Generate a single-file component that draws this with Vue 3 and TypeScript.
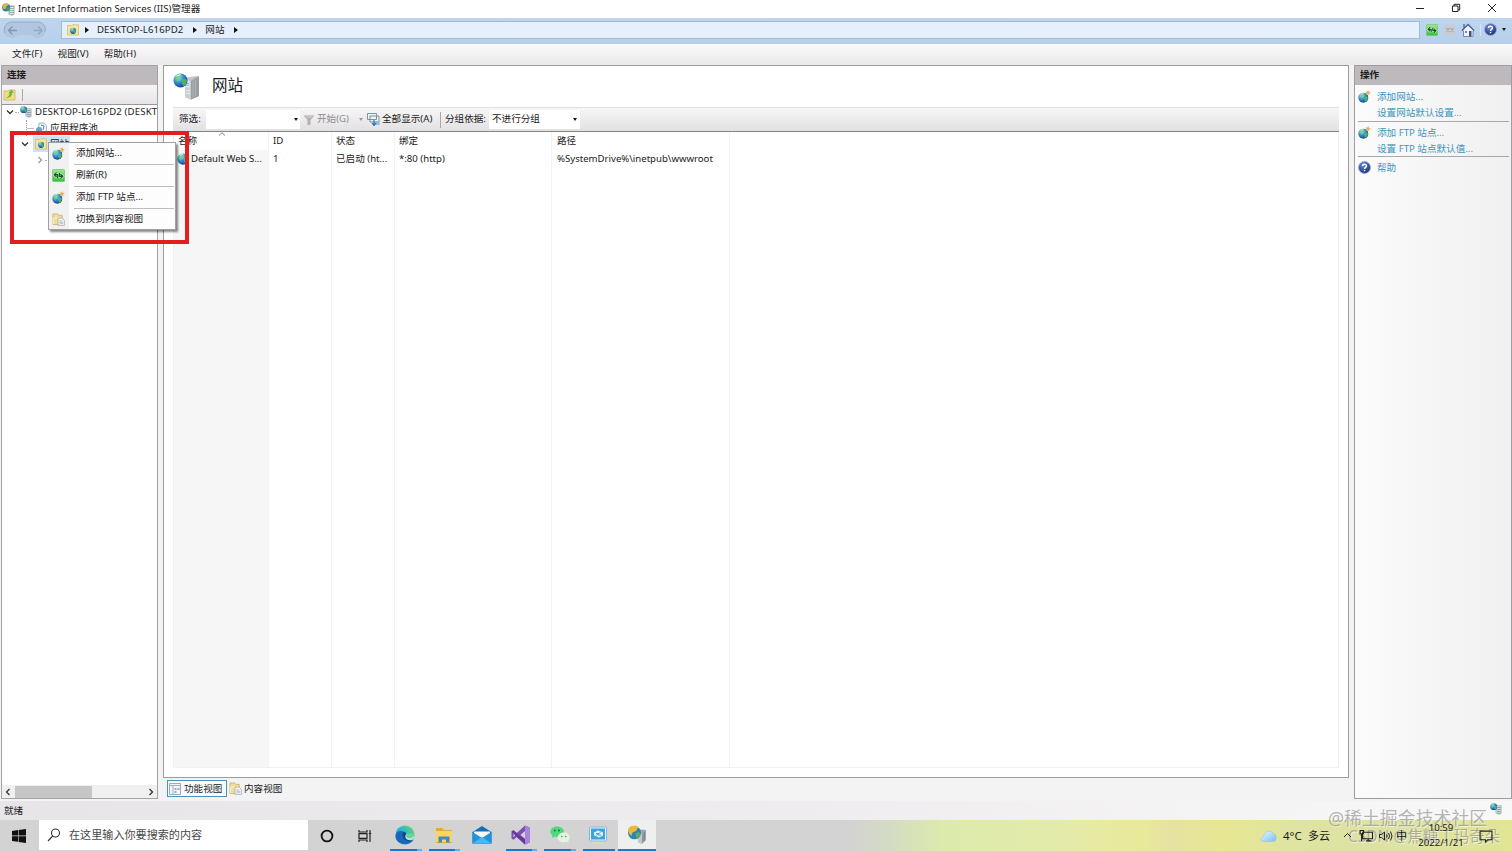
<script setup lang="ts">
interface Task { id: string; icon: string; running?: boolean; grouped?: boolean; active?: boolean }

const menus = ['文件(F)', '视图(V)', '帮助(H)']
const columns = ['名称', 'ID', '状态', '绑定', '路径', '']
const site = ['Default Web S...', '1', '已启动 (ht...', '*:80 (http)', '%SystemDrive%\\inetpub\\wwwroot', '']
const contextMenu = [
  { icon: 'addsite', label: '添加网站...' },
  { icon: 'refresh', label: '刷新(R)' },
  { icon: 'addsite', label: '添加 FTP 站点...' },
  { icon: 'content', label: '切换到内容视图' },
]
const actionGroups = [
  { icon: 'addsite', links: ['添加网站...', '设置网站默认设置...'] },
  { icon: 'addsite', links: ['添加 FTP 站点...', '设置 FTP 站点默认值...'] },
  { icon: 'help', links: ['帮助'] },
]
const tasks: Task[] = [
  { id: 'edge', icon: 'edge', running: true, grouped: true },
  { id: 'files', icon: 'files', running: true, grouped: true },
  { id: 'mail', icon: 'mail' },
  { id: 'vs', icon: 'vs', running: true, grouped: true },
  { id: 'wechat', icon: 'wechat', running: true, grouped: true },
  { id: 'remote', icon: 'remote', running: true },
  { id: 'iis', icon: 'iistask', running: true, active: true },
]
</script>

<template>
  <div class="screen">
    <svg class="defs" width="0" height="0">
      <defs>
        <radialGradient id="gGlobe" cx=".35" cy=".3" r=".75">
          <stop offset="0" stop-color="#a8e4fa" /><stop offset=".45" stop-color="#3b93d4" /><stop offset="1" stop-color="#153c8c" />
        </radialGradient>
        <linearGradient id="gServer" x1="0" x2="1" y1="0" y2="1">
          <stop offset="0" stop-color="#d6dade" /><stop offset="1" stop-color="#8a8f94" />
        </linearGradient>
        <radialGradient id="gHelp" cx=".4" cy=".3" r=".7">
          <stop offset="0" stop-color="#6d8be0" /><stop offset="1" stop-color="#16308c" />
        </radialGradient>
        <linearGradient id="gGreen" x1="0" x2="0" y1="0" y2="1">
          <stop offset="0" stop-color="#a0e892" /><stop offset="1" stop-color="#35c03a" />
        </linearGradient>
        <linearGradient id="gEdge" x1="0" x2="1" y1="1" y2="0">
          <stop offset="0" stop-color="#1273d0" /><stop offset=".5" stop-color="#27b3dc" /><stop offset="1" stop-color="#6ade55" />
        </linearGradient>
        <linearGradient id="gCloud" x1="0" x2="1" y1="0" y2="1">
          <stop offset="0" stop-color="#eafaff" /><stop offset="1" stop-color="#7dbdf0" />
        </linearGradient>
      </defs>
      <symbol id="globe" viewBox="0 0 16 16">
        <circle cx="8" cy="8" r="7.5" fill="url(#gGlobe)" />
        <path d="M2 4.500C4 1.500 7 1 9 1.500L10 4 7 5.500 6 8 3.500 8.500z" fill="#6fce6b" opacity=".75" />
        <path d="M9 7l4-1 2 2-1 4-3 2.500L9.500 11z" fill="#4fbd5e" opacity=".85" />
        <path d="M4 3.500C5.500 2 7 1.800 8 2" stroke="#e5fbff" stroke-width="1.300" fill="none" />
      </symbol>
      <symbol id="addsite" viewBox="0 0 14 14">
        <use href="#globe" x="0" y="2.500" width="11.500" height="11.500" />
        <path d="M11 0l.8 2 2.100.6-1.900 1.100.2 2.200-1.700-1.300-2 .8.7-2-1.200-1.800 2.100.1z" fill="#e8b061" />
      </symbol>
      <symbol id="iis" viewBox="0 0 27 27">
        <path d="M12 6.500l3-2.500 11-1v20l-8 3.500-6-2.500z" fill="url(#gServer)" />
        <path d="M12 7l6 1v18.500l-6-2.500z" fill="#c9ced3" />
        <path d="M18 8l8-4v19l-8 3.500z" fill="#999ea3" />
        <path d="M20 8v16M22.500 7v16" stroke="#b9bdc1" stroke-width=".8" />
        <path d="M13 17l4 .8M13 20l4 .8" stroke="#eef0f2" stroke-width=".9" />
        <path d="M12.500 7.500h4v7l-4-.5z" fill="#e9effa" />
        <path d="M13 10l3 .4M13 12l3 .4" stroke="#7389c8" stroke-width=".8" />
        <use href="#globe" x="0" y="0" width="15" height="15" />
      </symbol>
      <symbol id="iissmall" viewBox="0 0 13 13">
        <path d="M6 2.500h6.500v9L10 12.800 6 11.500z" fill="#9fb2b8" />
        <path d="M7 3.500h4.500v8.300H7z" fill="#dbe5e8" />
        <path d="M7.500 5h4M7.500 7h4M7.500 9h4M7.500 11h4" stroke="#728f8c" stroke-width=".9" />
        <use href="#globe" x="0" y="0" width="8" height="8" />
      </symbol>
      <symbol id="appicon" viewBox="0 0 13 13">
        <path d="M6.500 2.500h6v9l-2.500 1.300-3.500-1.500z" fill="#9ab0aa" />
        <path d="M8 4.500h3.500M8 6.500h3.500M8 8.500h3.500M8 10.500h3.500" stroke="#edf3ed" stroke-width=".9" />
        <circle cx="4.200" cy="4.500" r="4" fill="#2a7f9d" />
        <path d="M.5 2C2.500-.2 6 .1 7.200 1.500L4.500 3.500 3.800 6 1.500 6z" fill="#dfb342" />
        <path d="M5 5l3-.8-.8 3.300L5 8z" fill="#48a35c" />
      </symbol>
      <symbol id="iistask" viewBox="0 0 20 20">
        <path d="M11 6l3-1.500 5 .5v10l-4 4-4-2z" fill="#a0a4a7" />
        <path d="M11 7.500l4 .8V19l-4-2z" fill="#c2c7ca" />
        <path d="M16 8v9M17.500 7v9" stroke="#777c80" stroke-width=".7" />
        <circle cx="7.500" cy="7.800" r="6.500" fill="#2b83b8" />
        <path d="M1.500 3c3-3 8-2.500 10-1L9 6 5.500 7.500 4.500 11C1.500 9 .5 5 1.500 3z" fill="#e8b93a" />
        <path d="M8.500 8l4-1 .5 4-3.500 3z" fill="#58ae62" />
      </symbol>
      <symbol id="folder" viewBox="0 0 12 12">
        <path d="M.5 1.500h4l1-.8h6V11H.5z" fill="#f5e3a2" stroke="#d9bc6c" stroke-width=".8" />
        <use href="#globe" x="2.700" y="3.500" width="6.600" height="6.600" />
      </symbol>
      <symbol id="refresh" viewBox="0 0 12 12">
        <rect x=".4" y=".4" width="11.200" height="11.200" rx="1" fill="url(#gGreen)" stroke="#6cc866" stroke-width=".7" />
        <path d="M4.200 3.300L2 5.300l2.200 2M2.200 5.300h3v3M7.800 8.700L10 6.700l-2.200-2M9.800 6.700h-3v-3" stroke="#e6fbe2" stroke-width="2.300" fill="none" />
        <path d="M4.200 3.300L2 5.300l2.200 2M2.200 5.300h3v3M7.800 8.700L10 6.700l-2.200-2M9.800 6.700h-3v-3" stroke="#14622a" stroke-width="1.200" fill="none" />
      </symbol>
      <symbol id="content" viewBox="0 0 14 14">
        <path d="M1 1h5l1 1.500h4v10H1z" fill="#f1dc9a" stroke="#c5ab65" stroke-width=".8" />
        <path d="M1.500 12V5.500h8" fill="none" stroke="#fff5d2" />
        <path d="M6.500 5.500h4.500L13.300 8v5.600H6.500z" fill="#f7f7f5" stroke="#9b9d9f" stroke-width=".7" />
        <path d="M8 8.500h3M8 10h4M8 11.600h4" stroke="#8ba0c0" stroke-width=".7" />
      </symbol>
      <symbol id="help" viewBox="0 0 13 13">
        <circle cx="6.500" cy="6.500" r="6" fill="url(#gHelp)" stroke="#a4acc4" stroke-width=".9" />
        <path d="M4.500 5c0-2.400 4.100-2.300 4 0-.1 1.400-2 1.300-2 2.900M6.500 9v1.300" stroke="#fff" stroke-width="1.400" fill="none" />
      </symbol>
      <symbol id="edge" viewBox="0 0 20 20">
        <circle cx="10" cy="10" r="9.500" fill="url(#gEdge)" />
        <path d="M.5 11C1 6.500 5 5 8.500 6.500 6.500 8 6.500 12 9 14.500c2.500 2.300 6 2.300 9.500.5C16 18.500 10 20.500 5 18 2 16.500.5 14 .5 11z" fill="#1668bc" />
        <path d="M8.500 6.500C6.500 8 6.500 12 9 14.500c2.500 2.300 6 2.300 9.500.5-2 .7-5 .5-6.500-1-1.500-1.300-1.500-2.500-.5-4 .5-1.500-1-3-3-3.500z" fill="#114a8b" />
        <path d="M11.500 8c1 1.200.6 2.300 0 3.200.3 1.500 2.300 2 4.500 1.500 2.300-.6 3.700-2 3.500-4z" fill="#5fdc8c" />
        <path d="M11.300 8.500c.8 1 .5 2 0 2.700.4 1.600 2.500 2.100 5 1.500l2.700-1.400 0 1.600-2 2c-3 .4-5-.2-6-1.500-1-1.300-.8-2.400-.2-3.500z" fill="#d6d6d6" />
      </symbol>
      <symbol id="files" viewBox="0 0 20 20">
        <path d="M2 3h6l2 2h8v13H2z" fill="#e5a92f" />
        <path d="M2 6h16v11H2z" fill="#fbd563" />
        <path d="M4.500 17.500v-6h11v6H12v-3H8v3z" fill="#4589bd" />
      </symbol>
      <symbol id="mail" viewBox="0 0 20 20">
        <path d="M.5 7L10 1l9.500 6v11.500H.5z" fill="#1570b8" />
        <path d="M2 6.500h16V14H2z" fill="#f4faff" />
        <path d="M.5 7l9.500 6 9.500-6v11.500H.5z" fill="#2391dc" />
        <path d="M.5 18.500L10 12l9.500 6.500z" fill="#45baf0" />
      </symbol>
      <symbol id="vs" viewBox="0 0 20 20">
        <path d="M14 .5l5 2.200v14.600l-5 2.200L5.800 12 2.500 14.800.5 13.500v-7l2-1.300L5.800 8z M14 6l-4.600 4 4.600 4z M2.500 7.800v4.400L4.600 10z" fill="#7e4cb4" fill-rule="evenodd" />
        <path d="M14 .5l5 2.200v14.600l-5 2.200z" fill="#a983dc" />
        <path d="M2.500 5.200l3.300 2.800L14 14v5.500L5.800 12 .5 6.500z" fill="#68399a" />
      </symbol>
      <symbol id="wechat" viewBox="0 0 20 20">
        <path d="M2 13l.5-2.500C-2 7 1 1.500 7 1.500s9 5 5.500 8.500S5 11.500 5 11.500z" fill="#4fd97c" />
        <ellipse cx="13.700" cy="12.500" rx="6" ry="5" fill="#e4f5df" />
        <path d="M16 16l2.500 2-.4-3z" fill="#e4f5df" />
        <circle cx="4.800" cy="5.500" r=".9" fill="#176c2d" /><circle cx="9" cy="5.500" r=".9" fill="#176c2d" />
        <circle cx="11.800" cy="11.500" r=".8" fill="#708070" /><circle cx="15.700" cy="11.500" r=".8" fill="#708070" />
      </symbol>
      <symbol id="remote" viewBox="0 0 20 20">
        <rect x="1.500" y="2" width="17" height="14" rx="1" fill="#e9f5fc" stroke="#83b6d6" />
        <rect x="3" y="3.500" width="14" height="11" fill="#3aa3e0" />
        <path d="M6 7.500l4-2 5 2v3l-4 2-5-2z" fill="#dff3fd" />
        <path d="M8 10.500L12.500 7.500M8 8.500h3M10 10h3" stroke="#3aa3e0" />
        <path d="M4 17.500h12" stroke="#e8d8ad" stroke-width="1.500" />
      </symbol>
    </svg>

    <header class="titlebar">
      <svg class="app-icon"><use href="#appicon" /></svg>
      <span class="title">Internet Information Services (IIS)管理器</span>
      <div class="window-buttons">
        <svg viewBox="0 0 10 10"><path d="M1 5.500h8" /></svg>
        <svg viewBox="0 0 10 10"><path d="M1.500 3h5.500v5.500H1.500zM3 3V1.300h5.700V7H7" /></svg>
        <svg viewBox="0 0 10 10"><path d="M1 1l8 8M9 1L1 9" /></svg>
      </div>
    </header>

    <div class="addressbar">
      <svg class="nav" viewBox="0 0 44 19">
        <path d="M9.500 1h25c11 0 11 16 0 16-4 0-4-3-8-3h-9c-4 0-4 3-8 3C-2 17-2 1 9.500 1z" fill="#b0c6e1" />
        <path d="M1.500 12C0 5 4 1 9.500 1h25c6 0 9 5 7.500 10" fill="none" stroke="#93a8c6" stroke-width=".9" />
        <path d="M5.500 9.500H14M9.500 5.500l-4 4 4 4" fill="none" stroke="#8795ab" stroke-width="1.300" />
        <path d="M30.500 9.500H39M35 5.500l4 4-4 4" fill="none" stroke="#98a8c0" stroke-width="1.300" />
      </svg>
      <div class="address">
        <svg class="i12"><use href="#folder" /></svg><i class="tri"></i>
        <span class="host">DESKTOP-L616PD2</span><i class="tri"></i>
        <span class="leaf">网站</span><i class="tri"></i>
      </div>
      <div class="address-tools">
        <svg class="i12"><use href="#refresh" /></svg>
        <svg class="i12" viewBox="0 0 12 12"><rect x=".5" y=".5" width="11" height="11" rx="1" fill="#c7cdd3" /><path d="M2.500 4l3 4M5.500 4l-3 4M6.500 4l3 4M9.500 4l-3 4" fill="none" stroke="#a1a8ae" stroke-width="1.100" /></svg>
        <svg class="home" viewBox="0 0 14 14"><path d="M1 7.500L7 1.500l6 6-1 .5v5.500H2.500V8z" fill="#edf2fb" stroke="#7080aa" stroke-width=".9" /><path d="M1 7.500l6-6 6 6M3 1v4" fill="none" stroke="#4d62a5" stroke-width="1.300" /><path d="M8 8h2.500v5.500H8z" fill="#47536e" /><path d="M4 8h2v2H4z" fill="#6b91d2" /></svg>
        <i class="sep"></i>
        <svg class="i13"><use href="#help" /></svg><i class="caret"></i>
      </div>
    </div>

    <nav class="menubar"><span v-for="m in menus" :key="m">{{ m }}</span></nav>

    <main class="workspace">
      <aside class="connections">
        <h2>连接</h2>
        <div class="conn-tools">
          <svg class="i13" viewBox="0 0 13 13"><path d="M1 3h4l1-1h6v10H1z" fill="#f5dd83" stroke="#d0b15c" stroke-width=".8" /><path d="M3 10c2.500-1 3.500-3 3.500-5L5 5.500 8.500 1.500 11 5 9 4.500c.5 3-1.500 5.500-6 5.500z" fill="#62bb40" /></svg>
          <i></i>
        </div>
        <div class="tree">
          <div class="node root"><svg class="chev" viewBox="0 0 8 8"><path d="M1 2.500l3 3 3-3" /></svg><i class="dots"></i><svg class="i12"><use href="#iissmall" /></svg><span>DESKTOP-L616PD2 (DESKT</span></div>
          <div class="node pools"><i class="branch"></i><svg class="i12" viewBox="0 0 12 12"><path d="M4 1h5l2.500 3v6L9 11.500H3z" fill="#eef3f6" stroke="#8ea7b8" stroke-width=".8" /><circle cx="4" cy="8" r="3" fill="#60a6c6" /><path d="M6 3l3 1-1 4" fill="none" stroke="#4a8cc1" /></svg><span>应用程序池</span></div>
          <div class="node sites"><svg class="chev" viewBox="0 0 8 8"><path d="M1 2.500l3 3 3-3" /></svg><b><svg class="i12"><use href="#folder" /></svg></b><span>网站</span></div>
          <div class="node child"><svg class="chev pale" viewBox="0 0 8 8"><path d="M2.500 1l3 3-3 3" /></svg><i class="dots"></i></div>
        </div>
        <div class="hscroll">
          <svg viewBox="0 0 8 8"><path d="M5.500 1l-3 3 3 3" /></svg><i></i><svg class="end" viewBox="0 0 8 8"><path d="M2.500 1l3 3-3 3" /></svg>
        </div>
      </aside>

      <section class="center">
        <div class="page">
          <div class="heading"><svg><use href="#iis" /></svg><h1>网站</h1></div>
          <div class="toolbar">
            <span class="lbl">筛选:</span>
            <div class="combo filter"><i class="caret"></i></div>
            <svg class="i12 funnel" viewBox="0 0 12 12"><path d="M.5 1.500h11L7.500 6v4.500l-3 1V6z" fill="#b1b1b1" /><path d="M3 3h6" stroke="#d8d8d8" /></svg>
            <span class="go">开始(G)</span><i class="caret dim"></i>
            <svg class="i13" viewBox="0 0 13 13"><path d="M.5.500h9v6h-9zM3 3h9v6H3z" fill="#edf3f8" stroke="#71879c" stroke-width=".9" /><path d="M6 8h6.500v4H6z" fill="#8fbde0" /><path d="M7 7v5M5 10l2 2.500 2-2.500" stroke="#2972b0" stroke-width="1.100" fill="none" /></svg>
            <span class="all">全部显示(A)</span><i class="bar"></i>
            <span class="group">分组依据:</span>
            <div class="combo grouping"><span>不进行分组</span><i class="caret"></i></div>
          </div>
          <div class="list">
            <div v-for="(c, i) in columns" :key="i" class="col">
              <svg v-if="i === 0" class="sort" viewBox="0 0 8 4"><path d="M1 3.500L4 .8l3 2.700" /></svg>
              <span class="head">{{ c }}</span>
              <span class="cell"><svg v-if="i === 0" class="i12"><use href="#globe" /></svg><em>{{ site[i] }}</em></span>
            </div>
          </div>
        </div>
        <div class="tabs">
          <span class="tab on"><svg class="i12" viewBox="0 0 12 12"><path d="M.5.500h11v11H.5z" fill="#f4f7fa" stroke="#8796a5" stroke-width=".8" /><path d="M1 2.500h10M4 3v8" stroke="#a0afbd" /><path d="M5.500 5h2v2h-2zM8.500 5h2v2h-2zM5.500 8h2v2h-2z" fill="#9ab" /></svg>功能视图</span>
          <span class="tab"><svg class="i13"><use href="#content" /></svg>内容视图</span>
        </div>
      </section>

      <aside class="actions">
        <h2>操作</h2>
        <div v-for="(g, i) in actionGroups" :key="i" class="action-group">
          <svg class="i13"><use :href="'#' + g.icon" /></svg>
          <div><a v-for="l in g.links" :key="l">{{ l }}</a></div>
        </div>
      </aside>
    </main>

    <footer class="status"><span>就绪</span><svg class="i12"><use href="#iissmall" /></svg></footer>

    <div class="taskbar">
      <div class="start"><svg viewBox="0 0 14 14"><path d="M0 2l6-.9v5.500H0zM6.600 1L14 0v6.600H6.600zM0 7.300h6v5.500L0 12zM6.600 7.300H14V14l-7.400-1z" /></svg></div>
      <div class="search"><svg viewBox="0 0 14 14"><circle cx="8.500" cy="5" r="4" /><path d="M5.700 8L1 13" /></svg><span>在这里输入你要搜索的内容</span></div>
      <div class="sys"><svg viewBox="0 0 14 14"><circle cx="7" cy="7" r="5.400" fill="none" stroke="#111" stroke-width="1.800" /></svg></div>
      <div class="sys"><svg viewBox="0 0 14 14"><path d="M1 1v2h8V1M1 13v-2h8v2M1 4.700h8v4.600H1zM12 1v12M10.800 4.500h2.400" fill="none" stroke="#222" stroke-width="1.200" /></svg></div>
      <div class="tasks">
        <div v-for="t in tasks" :key="t.id" class="task" :class="{ running: t.running, grouped: t.grouped, active: t.active }"><svg><use :href="'#' + t.icon" /></svg></div>
      </div>
      <div class="tray">
        <svg class="cloud" viewBox="0 0 17 12"><path d="M3.500 11.500C-.5 11 0 7 3.500 6.500 5 0 12 0 13 3.500c4 0 4.500 8 0 8z" fill="url(#gCloud)" stroke="#88bce5" stroke-width=".5" /></svg>
        <span class="temp">4°C</span><span class="sky">多云</span>
        <svg class="up" viewBox="0 0 9 9"><path d="M1 6l3.500-3.500L8 6" /></svg>
        <svg class="net" viewBox="0 0 13 11"><path d="M3 2h9v6H3zM6 10h5M8 8v2M.7.500h3v3h-3zM2 3.500V10" /></svg>
        <svg class="vol" viewBox="0 0 14 12"><path d="M1 4.500h2L6 2v8L3 7.500H1zM8 4.500q1 1.500 0 3M10 3q2 3 0 6M12 1.500q3 4.500 0 9" /></svg>
        <span class="ime">中</span>
        <div class="clock"><span>10:59</span><span>2022/1/21</span></div>
        <svg class="note" viewBox="0 0 13 13"><path d="M1 2h11v8H8l-2 2v-2H1z" /></svg>
      </div>
    </div>

    <div class="context">
      <div v-for="(m, i) in contextMenu" :key="i" class="ctx-item"><svg class="i13"><use :href="'#' + m.icon" /></svg><span>{{ m.label }}</span></div>
    </div>
    <div class="highlight"></div>
    <div class="mark one">@稀土掘金技术社区</div>
    <div class="mark two">CSDN @焦糖丁玛奇朵</div>
  </div>
</template>

<style>
html, body { margin: 0; overflow: hidden; }
</style>

<style scoped>
.screen { position: relative; width: 1512px; height: 851px; overflow: hidden; display: flex; flex-direction: column; background: #f3f2f3; color: #1b1b1b; font: 9.6px/16px "Noto Sans", "Noto Sans CJK SC", sans-serif; white-space: nowrap; }
.screen * { box-sizing: border-box; }
.defs { position: absolute; }
svg { display: block; flex: none; }
i, em { font-style: normal; flex: none; }
h1, h2 { margin: 0; font-weight: 400; }
.i12 { width: 12px; height: 12px; }
.i13 { width: 13px; height: 13px; }
.caret { width: 0; height: 0; border: 2.5px solid transparent; border-top: 3px solid #111; border-bottom: 0; }
.caret.dim { border-top-color: #999; }

.titlebar { height: 18px; flex: none; display: flex; align-items: center; background: #fff; padding-left: 2px; }
.app-icon { width: 13px; height: 13px; margin-right: 3px; }
.title { letter-spacing: .02px; }
.window-buttons { margin-left: auto; display: flex; gap: 26px; padding: 0 15px 2px 0; }
.window-buttons svg { width: 10px; height: 10px; fill: none; stroke: #222; stroke-width: 1; }

.addressbar { height: 26px; flex: none; display: flex; align-items: center; background: linear-gradient(#bfd5ee, #b6d0eb); padding-left: 3px; }
.nav { width: 44px; height: 19px; margin-top: -2px; }
.address { width: 1359px; height: 18px; margin: -2px 0 0 14px; border: 1px solid #a3bbd6; background: #e6f0fc; display: flex; align-items: center; padding-left: 5px; }
.tri { width: 0; height: 0; border: 3px solid transparent; border-left: 4px solid #111; border-right: 0; }
.address .i12 + .tri { margin-left: 6px; }
.host { margin: 0 10px 0 8px; letter-spacing: .1px; }
.leaf { margin: 0 9px 0 8px; }
.address-tools { display: flex; align-items: center; margin: -3px 0 0 6px; }
.address-tools .i12 + .i12 { margin-left: 6px; }
.home { width: 14px; height: 14px; margin-left: 5px; }
.sep { width: 1px; height: 12px; background: #d9e5f3; margin: 0 3px 0 5px; }
.address-tools .caret { margin-left: 5px; }

.menubar { height: 21px; flex: none; display: flex; gap: 15px; padding: 0 0 1px 12px; align-items: center; letter-spacing: .1px; background: linear-gradient(#fbfafb, #ebe9eb); }

.workspace { flex: none; height: 736px; display: flex; align-items: flex-start; background: #f4f3f4; padding-left: 1px; }
.workspace h2 { height: 19px; background: #bdb9bd; font-size: 9.6px; line-height: 18px; font-weight: 700; padding-left: 5px; }
.connections { width: 157px; height: 734px; border: 1px solid #a2a2a7; background: #fff; display: flex; flex-direction: column; overflow: hidden; }
.conn-tools { height: 20px; display: flex; align-items: center; gap: 6px; padding-left: 1px; background: linear-gradient(#f7f6f7, #e7e5e7); border-bottom: 1px solid #96969b; flex: none; }
.conn-tools i { width: 1px; height: 12px; background: #aaa; }
.connections h2 { flex: none; }
.tree { flex: 1; overflow: hidden; }
.node { height: 16px; display: flex; align-items: center; padding-bottom: 2px; }
.root { padding-left: 4px; }
.chev { width: 8px; height: 8px; fill: none; stroke: #333; stroke-width: 1.3; }
.chev.pale { stroke: #999; }
.dots { width: 4px; border-top: 1px dotted #aaa; margin: 0 1px 0 1px; }
.root span { margin-left: 3px; letter-spacing: .14px; }
.branch { width: 8px; height: 16px; border-left: 1px dotted #999; background: linear-gradient(#bbb, #bbb) 0 8px / 8px 1px no-repeat; }
.pools { padding-left: 24px; }
.pools span { margin-left: 3px; }
.pools .i12 { margin-left: 1px; }
.sites { padding-left: 19px; }
.sites b { height: 16px; padding: 2px 2px; margin-left: 4px; background: #cbe3f7; }
.sites span { padding: 0 1px; background: #cbe3f7; }
.child { padding-left: 34px; }
.hscroll { height: 13px; flex: none; background: #f0f0f0; display: flex; align-items: center; padding: 0 2px; }
.hscroll i { width: 77px; height: 12px; background: #c6c6c6; margin-left: 3px; }
.hscroll svg { width: 8px; height: 8px; fill: none; stroke: #333; stroke-width: 1.3; }
.hscroll .end { margin-left: auto; }

.center { width: 1186px; margin-left: 5px; }
.page { height: 713px; border: 1px solid #9b9ba0; background: #fff; padding: 0 9px; }
.heading { height: 41px; display: flex; align-items: center; }
.heading svg { width: 27px; height: 27px; margin-top: 0; }
.heading h1 { font-size: 15.5px; margin: -4px 0 0 12px; }
.toolbar { height: 25px; display: flex; align-items: center; border-top: 1px solid #e1e1e1; border-bottom: 1px solid #858589; background: linear-gradient(#f8f7f8, #e2e0e2); }
.toolbar span { margin-top: -1px; }
.toolbar .lbl { margin-left: 6px; width: 27px; }
.combo { height: 19px; background: #fff; display: flex; align-items: center; justify-content: space-between; padding-right: 3px; }
.filter { width: 94px; justify-content: flex-end; padding-right: 2px; }
.funnel { margin-left: 3px; }
.toolbar .go { margin-left: 2px; width: 42px; color: #8c8c8c; }
.toolbar .i13 { margin-left: 4px; }
.toolbar .all { margin-left: 2px; width: 53px; }
.bar { width: 1px; height: 16px; background: #a9a9a9; margin-left: 5px; }
.toolbar .group { margin-left: 4px; width: 43px; }
.grouping { width: 91px; padding-left: 3px; margin-left: 1px; }
.list { height: 636px; display: grid; grid-template-columns: 95px 63px 63px 157px 178px 1fr; border: 1px solid #f0f0f0; border-top: 0; }
.col { position: relative; border-right: 1px solid #f3f3f3; padding: 0 0 0 4px; overflow: hidden; }
.col:first-child { background: linear-gradient(#fff 18px, #f6f6f6 18px); }
.col:nth-child(5) { padding-left: 5px; }
.col:last-child { border-right: 0; }
.sort { position: absolute; width: 8px; height: 4px; left: 44px; top: 0; fill: none; stroke: #777; stroke-width: .9; }
.head, .cell { display: flex; align-items: center; height: 18px; }
.cell .i12 { margin: 0 2px 0 -1px; }
.tabs { display: flex; height: 22px; padding: 2px 0 0 4px; }
.tab { display: flex; align-items: center; gap: 2px; height: 17px; padding: 0 3px 0 2px; }
.tab.on { width: 60px; gap: 3px; border: 1px solid #4b92b8; background: #f7fbff; padding: 0 0 0 1px; }

.actions { width: 158px; height: 734px; margin-left: 5px; border: 1px solid #9c9ca1; background: linear-gradient(90deg, #fbfbfb, #f1f0f1); }
.action-group { display: flex; margin: 0 2px 0 3px; padding: 3px 0 0; border-bottom: 1px solid #a9a9a9; color: #3c95bd; }
.action-group:nth-child(2) { padding: 4px 0 1px; }
.action-group:last-child { border: 0; }
.action-group .i13 { margin: 1px 6px 0 0; }
.action-group a { display: block; height: 15.500px; line-height: 15.500px; }

.status { height: 19px; flex: none; display: flex; justify-content: space-between; padding: 2px 10px 0 4px; background: linear-gradient(90deg, #e8e5e8, #eeecee 50%, #f9f8f8); }

.taskbar { flex: none; height: 31px; display: flex; background: linear-gradient(90deg, #d3d3d3 850px, #d3dcc3 890px, #dcebac 945px, #e4ebaa 1060px, #e9e99a 1140px, #e6e2a2 1170px, #e7e792 1225px, #dfe4a1 1290px, #dde2a5 1400px, #e2e594); }
.start { width: 39px; padding: 9px 0 0 12px; }
.start svg { width: 14px; height: 14px; fill: #111; }
.search { width: 269px; height: 30px; background: #fff; display: flex; align-items: center; padding-left: 8px; font-size: 11.1px; color: #484848; }
.search svg { width: 14px; height: 14px; margin-right: 8px; fill: none; stroke: #333; stroke-width: 1.1; }
.sys { width: 38px; display: grid; place-items: center; }
.sys svg { width: 14px; height: 14px; }
.tasks { display: flex; margin-left: 2px; }
.task { position: relative; width: 38.600px; display: grid; place-items: center; }
.task svg { width: 20px; height: 20px; margin-top: -1px; }
.task.running::after { content: ""; position: absolute; left: 4px; right: 3px; bottom: 0; height: 2px; background: #1979ca; }
.task.grouped::after { background: linear-gradient(90deg, #1979ca 84%, #6aaddd 84%); }
.task.active { background: #eeefef; }
.task.active::after { left: 0; right: 0; }
.tray { position: relative; z-index: 2; margin-left: auto; display: flex; align-items: center; padding-right: 19px; }
.tray svg { fill: none; stroke: #222; stroke-width: 1; }
.cloud { width: 17px; height: 12px; }
.temp { font-size: 11.5px; margin-left: 6px; width: 20px; }
.sky { font-size: 11px; margin-left: 5px; }
.up { width: 9px; height: 9px; margin-left: 13px; }
.net { width: 15px; height: 12px; margin-left: 7px; }
.vol { width: 15px; height: 12px; margin-left: 4px; }
.ime { font-size: 11px; margin-left: 3px; }
.clock { width: 50px; margin-left: 9px; font-size: 9.6px; line-height: 15px; display: flex; flex-direction: column; align-items: center; margin-top: -1px; }
.note { width: 14px; height: 14px; margin-left: 13px; }

.context { position: absolute; left: 48px; top: 142px; width: 128px; height: 88px; background: linear-gradient(90deg, #f1f1f1 20px, #fdfdfd 20px); border: 1px solid #a0a0a0; box-shadow: 2px 2px 2px #0007; }
.ctx-item { height: 22px; display: flex; align-items: center; padding: 0 0 2px 3px; position: relative; }
.ctx-item span { margin-left: 11px; }
.ctx-item + .ctx-item::before { content: ""; position: absolute; left: 25px; right: 1px; top: -1px; border-top: 1px solid #bdbdbd; }
.highlight { position: absolute; left: 10px; top: 131px; width: 179px; height: 113px; border: 4px solid #e21d24; }
.mark { position: absolute; z-index: 1; color: #85858599; text-shadow: 1px 1px 0 #ffffff88; }
.one { left: 1328px; top: 806px; font-size: 17.900px; line-height: 24px; }
.two { left: 1348px; top: 826px; font-size: 15.500px; line-height: 20px; }
</style>
